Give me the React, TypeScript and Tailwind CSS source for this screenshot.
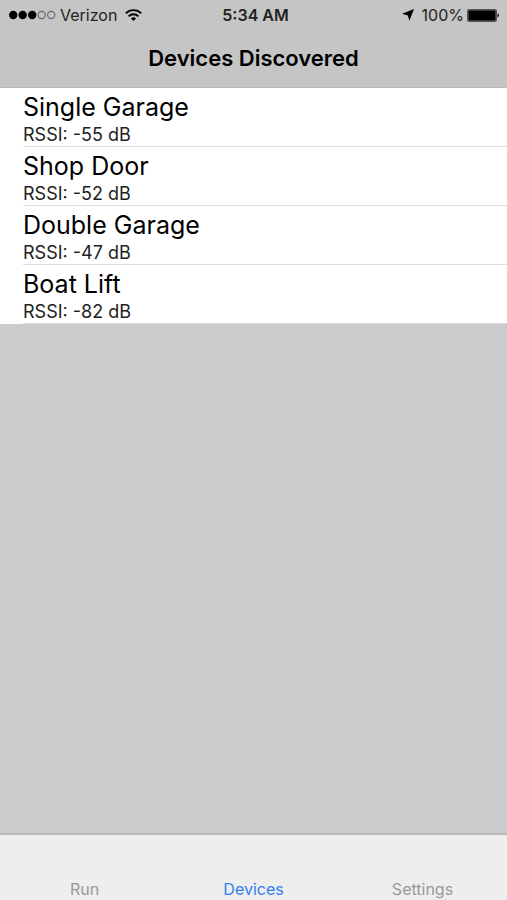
import React from 'react';

interface Device {
  name: string;
  rssi: number;
}

const devices: Device[] = [
  { name: 'Single Garage', rssi: -55 },
  { name: 'Shop Door', rssi: -52 },
  { name: 'Double Garage', rssi: -47 },
  { name: 'Boat Lift', rssi: -82 },
];

const tabs = ['Run', 'Devices', 'Settings'];

const StatusBar: React.FC = () => (
  <div className="grid grid-cols-[1fr_auto_1fr] items-center h-[30px] pl-2 pr-1 text-base text-[#222222]">
    <div className="flex items-center">
      <svg width="48" height="10" viewBox="0 0 48 10" aria-hidden="true">
        <circle cx="5.2" cy="5" r="4.2" fill="black" />
        <circle cx="14.7" cy="5" r="4.2" fill="black" />
        <circle cx="24.2" cy="5" r="4.2" fill="black" />
        <circle cx="33.7" cy="5" r="3.6" fill="none" stroke="#666666" strokeWidth="1.1" />
        <circle cx="43.2" cy="5" r="3.6" fill="none" stroke="#666666" strokeWidth="1.1" />
      </svg>
      <span className="ml-1">Verizon</span>
      <svg className="ml-2" width="17" height="12" viewBox="0 0 17 12" fill="none" stroke="black" strokeWidth="1.8" aria-hidden="true">
        <path d="M0.8 4.4a10.9 10.9 0 0 1 15.4 0" />
        <path d="M3.6 7.3a6.9 6.9 0 0 1 9.8 0" />
        <path d="M8.5 12L5.9 9.6a3.7 3.7 0 0 1 5.2 0z" fill="black" stroke="none" />
      </svg>
    </div>
    <span className="font-semibold">5:34 AM</span>
    <div className="flex items-center justify-end">
      <svg width="12" height="12" viewBox="0 0 12 12" aria-hidden="true">
        <path d="M12 0L7.4 11.8L5.8 6.6L0 4.8z" />
      </svg>
      <span className="ml-2">100%</span>
      <svg className="ml-[3px]" width="36" height="13" viewBox="0 0 36 13" aria-hidden="true">
        <rect x="0.5" y="0.5" width="29" height="12" rx="1" fill="#777777" stroke="#555555" />
        <rect x="1.5" y="1.5" width="27" height="10" fill="black" />
        <path d="M30.5 4.3q3 2.2 0 4.4z" />
      </svg>
    </div>
  </div>
);

export default function App() {
  return (
    <div className="min-h-screen flex flex-col bg-[#c9cbcd] text-black font-[Inter,sans-serif]">
      <header className="bg-[#c5c5c5] border-b border-[#b9b9b9]">
        <StatusBar />
        <h1 className="h-[57px] leading-[56px] text-center text-[22px] font-semibold">Devices Discovered</h1>
      </header>

      <main className="flex-1">
        <ul className="bg-white">
          {devices.map((device) => (
            <li key={device.name} className="pl-[23px]">
              <div className="h-[59px] pt-[3px] border-b border-[#dddddf]">
                <h2 className="text-[25px] leading-8">{device.name}</h2>
                <p className="text-lg leading-6 text-[#222222]">RSSI: {device.rssi} dB</p>
              </div>
            </li>
          ))}
        </ul>
      </main>

      <nav className="h-[67px] grid grid-cols-3 bg-[#eeeeee] border-t-2 border-[#b9babb]">
        {tabs.map((tab) => (
          <button
            key={tab}
            type="button"
            className={`flex items-end justify-center text-base leading-[22px] ${tab === 'Devices' ? 'text-[#2f80f0]' : 'text-[#999999]'}`}
          >
            {tab}
          </button>
        ))}
      </nav>
    </div>
  );
}
